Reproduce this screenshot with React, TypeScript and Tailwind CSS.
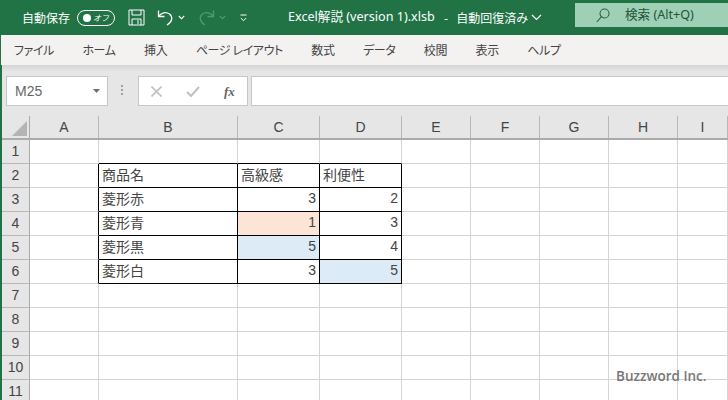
import React from "react";

const cols = ["A", "B", "C", "D", "E", "F", "G", "H", "I"];
const tabs = ["ファイル", "ホーム", "挿入", "ページ レイアウト", "数式", "データ", "校閲", "表示", "ヘルプ"];

type Cell = { t?: string; right?: boolean; bg?: string };
const data: Record<string, Cell> = {
  B2: { t: "商品名" }, C2: { t: "高級感" }, D2: { t: "利便性" },
  B3: { t: "菱形赤" }, C3: { t: "3", right: true }, D3: { t: "2", right: true },
  B4: { t: "菱形青" }, C4: { t: "1", right: true, bg: "bg-[#fce4d6]" }, D4: { t: "3", right: true },
  B5: { t: "菱形黒" }, C5: { t: "5", right: true, bg: "bg-[#ddebf7]" }, D5: { t: "4", right: true },
  B6: { t: "菱形白" }, C6: { t: "3", right: true }, D6: { t: "5", right: true, bg: "bg-[#ddebf7]" },
};

function cellClass(c: string, r: number) {
  const inT = (col: string, row: number) => ["B", "C", "D"].includes(col) && row >= 2 && row <= 6;
  const next = cols[cols.indexOf(c) + 1];
  const blackRight = inT(c, r) || (next ? inT(next, r) : false);
  const blackBottom = inT(c, r) || inT(c, r + 1);
  return `${blackRight ? "border-r-black" : "border-r-[#d4d4d4]"} ${blackBottom ? "border-b-black" : "border-b-[#d4d4d4]"}`;
}

function Chevron({ color = "#ffffff" }: { color?: string }) {
  return (
    <svg width="7" height="5" viewBox="0 0 7 5" fill="none" stroke={color} strokeWidth="1.1">
      <path d="M0.8 1 L3.5 3.7 L6.2 1" />
    </svg>
  );
}

export default function App() {
  const rows = [1, 2, 3, 4, 5, 6, 7, 8, 9, 10, 11];
  return (
    <div className="relative w-[728px] h-[400px] overflow-hidden bg-white font-['Noto_Sans_CJK_JP',sans-serif] text-[#444]">
      {/* Title bar */}
      <div className="h-[35px] bg-[#217346] text-white flex items-center text-[12px]">
        <span className="ml-[22px] w-[48px] whitespace-nowrap">自動保存</span>
        <div className="ml-[7px] w-[38px] h-[16px] rounded-full border border-white flex items-center justify-between pl-[5px] pr-[5px]">
          <span className="w-[8px] h-[8px] rounded-full bg-white" />
          <span className="text-[8px] italic leading-none">オフ</span>
        </div>
        <svg className="ml-[13px]" width="17" height="17" viewBox="0 0 17 17" fill="none" stroke="#ffffff" strokeWidth="1">
          <path d="M1 1 H16 V16 H1 Z M4 1 V6 H13 V1 M4 16 V10 H13 V16 M10 11 V15" />
        </svg>
        <svg className="ml-[12px]" width="17" height="17" viewBox="0 0 17 17" fill="none" stroke="#ffffff" strokeWidth="1.3">
          <path d="M1.5 1.5 V7.5 H7.5 M1.5 7.5 C4 3.5 9 2.5 12.5 5 C16 8 15.5 12.5 10 16" />
        </svg>
        <span className="ml-[4px]"><Chevron /></span>
        <svg className="ml-[13px]" width="17" height="17" viewBox="0 0 17 17" fill="none" stroke="#4f9a72" strokeWidth="1.3">
          <path d="M15.5 1.5 V7.5 H9.5 M15.5 7.5 C13 3.5 8 2.5 4.5 5 C1 8 1.5 12.5 7 16" />
        </svg>
        <span className="ml-[4px]"><Chevron color="#4f9a72" /></span>
        <svg className="ml-[14px]" width="7" height="8" viewBox="0 0 7 8" fill="none" stroke="#ffffff" strokeWidth="1">
          <path d="M0.5 1 H6.5 M0.8 4 L3.5 6.7 L6.2 4" />
        </svg>
        <span className="ml-[41px] w-[148px] whitespace-nowrap text-[12.6px] font-['Noto_Sans','Noto_Sans_CJK_JP',sans-serif]">Excel解説 (version 1).xlsb</span>
        <span className="ml-[8px]">-</span>
        <span className="ml-[8px] whitespace-nowrap">自動回復済み</span>
        <svg className="ml-[3px]" width="11" height="7" viewBox="0 0 11 7" fill="none" stroke="#ffffff" strokeWidth="1.2">
          <path d="M1 1 L5.5 5.5 L10 1" />
        </svg>
        <div className="ml-auto w-[153px] h-[24px] -mt-[5px] bg-[#9fd0b5] text-[#22543a] flex items-center">
          <svg className="ml-[21px]" width="14" height="15" viewBox="0 0 14 15" fill="none" stroke="#2e6347" strokeWidth="1.1">
            <circle cx="8.5" cy="5.5" r="4.5" />
            <path d="M5.3 8.8 L0.8 14" />
          </svg>
          <span className="ml-[15px] whitespace-nowrap text-[12.6px] font-['Noto_Sans','Noto_Sans_CJK_JP',sans-serif]">検索 (Alt+Q)</span>
        </div>
      </div>

      {/* Ribbon tabs */}
      <div className="h-[30px] bg-[#f3f2f1] border-l border-l-[#217346] flex items-center pl-[13px] gap-[28.5px] text-[12px] tracking-[-0.4px] text-[#444] [font-feature-settings:'palt'] whitespace-nowrap">
        {tabs.map((t) => (
          <span key={t}>{t}</span>
        ))}
      </div>

      {/* Formula bar */}
      <div className="h-[51px] bg-gradient-to-b from-[#d4d4d4] via-[#e6e6e6] via-[12%] to-[#e6e6e6] border-l-2 border-l-[#217346] flex pt-[11px] items-start">
        <div className="ml-[4px] w-[102px] h-[30px] bg-white border border-[#c6c6c6] flex items-center justify-between pl-[8px] pr-[7px] text-[14px] text-[#666] font-['Liberation_Sans',sans-serif]">
          <span>M25</span>
          <svg width="7" height="4" viewBox="0 0 7 4"><path d="M0 0 H7 L3.5 4 Z" fill="#707070" /></svg>
        </div>
        <div className="ml-[13px] mt-[9px] flex flex-col gap-[2px]">
          {[0, 1, 2].map((i) => (
            <span key={i} className="w-[2px] h-[2px] bg-[#a0a0a0]" />
          ))}
        </div>
        <div className="ml-[15px] w-[110px] h-[30px] bg-white border border-[#c6c6c6] flex items-center pl-[12px]">
          <svg width="11" height="11" viewBox="0 0 11 11" stroke="#c0c0c0" strokeWidth="1.6"><path d="M0.5 0.5 L10.5 10.5 M10.5 0.5 L0.5 10.5" /></svg>
          <svg className="ml-[24px]" width="14" height="11" viewBox="0 0 14 11" fill="none" stroke="#c0c0c0" strokeWidth="2"><path d="M1 6 L5 10 L13 1" /></svg>
          <span className="ml-[24px] text-[13px] italic font-bold leading-none text-[#666] font-['Liberation_Serif',serif]">fx</span>
        </div>
        <div className="ml-[3px] flex-1 h-[30px] bg-white border-y border-l border-[#c6c6c6]" />
      </div>

      {/* Sheet */}
      <div className="border-l-2 border-l-[#217346]">
        {/* Column headers */}
        <div className="grid grid-cols-[28px_69px_139px_82px_82px_69px_69px_69px_69px_50px] w-[726px] h-[24px] bg-[#e6e6e6] border-b-2 border-b-[#ababab] text-[14px] text-[#444] font-['Liberation_Sans',sans-serif]">
          <div className="border-r border-r-[#ababab] relative overflow-hidden">
            <svg className="absolute left-[10px] top-[5px]" width="15" height="15" viewBox="0 0 15 15"><path d="M15 0 V15 H0 Z" fill="#b4b4b4" /></svg>
          </div>
          {cols.map((c) => (
            <div key={c} className="border-r border-r-[#b8b8b8] flex items-center justify-center pt-[1px]">{c}</div>
          ))}
          <div />
        </div>
        {/* Rows */}
        {rows.map((r) => (
          <div key={r} className="grid grid-cols-[28px_69px_139px_82px_82px_69px_69px_69px_69px_50px] grid-rows-[24px] w-[726px] h-[24px]">
            <div className="bg-[#e6e6e6] border-r border-r-[#ababab] border-b border-b-[#b8b8b8] flex items-center justify-center text-[14px] text-[#444] font-['Liberation_Sans',sans-serif]">{r}</div>
            {cols.map((c) => {
              const d = data[`${c}${r}`];
              return (
                <div
                  key={c}
                  className={`border-r border-b flex items-center text-[14px] leading-[16px] px-[3px] pb-[3px] whitespace-nowrap ${cellClass(c, r)} ${d?.bg ?? ""} ${d?.right ? "justify-end font-['Liberation_Sans',sans-serif]" : ""}`}
                >
                  {d?.t}
                </div>
              );
            })}
            <div className="border-b border-b-[#d4d4d4]" />
          </div>
        ))}
      </div>

      <div className="absolute left-[616px] top-[366px] text-[13.5px] font-semibold text-[#777] font-['Open_Sans',sans-serif] whitespace-nowrap">Buzzword Inc.</div>
    </div>
  );
}
